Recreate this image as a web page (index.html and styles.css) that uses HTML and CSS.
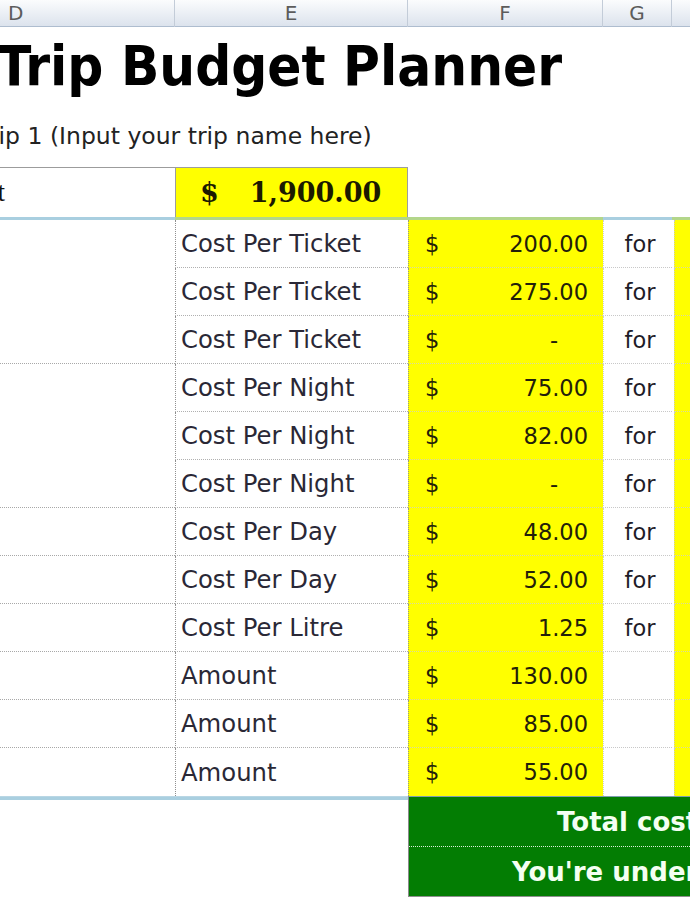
FILE: index.html
```html
<!DOCTYPE html>
<html>
<head>
<meta charset="utf-8">
<link rel="stylesheet" href="styles.css">
</head>
<body>
<div class="sheet">
  <div class="colhead">
    <div class="ch ch-d">D</div>
    <div class="ch">E</div>
    <div class="ch">F</div>
    <div class="ch">G</div>
    <div class="ch ch-h"></div>
  </div>

  <div class="title-row"><span class="title">Trip Budget Planner</span></div>
  <div class="sub-row"><span class="subtitle">Trip 1 (Input your trip name here)</span></div>

  <div class="budget-row">
    <div class="b-label"><span>Total Budget</span></div>
    <div class="b-value"><span class="cur">$</span><span>1,900.00</span></div>
  </div>
  <div class="sep-top">
    <div class="seg blue"></div><div class="seg green"></div><div class="seg green"></div><div class="seg blue"></div><div class="seg green"></div>
  </div>

  <div class="grid">
    <div class="d span3"></div>
    <div class="e">Cost Per Ticket</div><div class="f"><span>$</span><span>200.00</span></div><div class="g">for</div><div class="h"></div>
    <div class="e">Cost Per Ticket</div><div class="f"><span>$</span><span>275.00</span></div><div class="g">for</div><div class="h"></div>
    <div class="e">Cost Per Ticket</div><div class="f"><span>$</span><span class="dash">-</span></div><div class="g">for</div><div class="h"></div>

    <div class="d span3"></div>
    <div class="e">Cost Per Night</div><div class="f"><span>$</span><span>75.00</span></div><div class="g">for</div><div class="h"></div>
    <div class="e">Cost Per Night</div><div class="f"><span>$</span><span>82.00</span></div><div class="g">for</div><div class="h"></div>
    <div class="e">Cost Per Night</div><div class="f"><span>$</span><span class="dash">-</span></div><div class="g">for</div><div class="h"></div>

    <div class="d"></div>
    <div class="e">Cost Per Day</div><div class="f"><span>$</span><span>48.00</span></div><div class="g">for</div><div class="h"></div>
    <div class="d"></div>
    <div class="e">Cost Per Day</div><div class="f"><span>$</span><span>52.00</span></div><div class="g">for</div><div class="h"></div>
    <div class="d"></div>
    <div class="e">Cost Per Litre</div><div class="f"><span>$</span><span>1.25</span></div><div class="g">for</div><div class="h"></div>
    <div class="d"></div>
    <div class="e">Amount</div><div class="f"><span>$</span><span>130.00</span></div><div class="g"></div><div class="h"></div>
    <div class="d"></div>
    <div class="e">Amount</div><div class="f"><span>$</span><span>85.00</span></div><div class="g"></div><div class="h"></div>
    <div class="d"></div>
    <div class="e">Amount</div><div class="f"><span>$</span><span>55.00</span></div><div class="g"></div><div class="h"></div>
  </div>

  <div class="bottom">
    <div class="bottom-left"></div>
    <div class="totals">
      <div class="tot tot-1">Total cost</div>
      <div class="tot tot-2">You're under</div>
    </div>
  </div>
</div>
</body>
</html>
```

FILE: styles.css
```css
html, body {
  margin: 0;
  padding: 0;
  background: #ffffff;
}
body {
  width: 690px;
  height: 900px;
  overflow: hidden;
  font-family: "DejaVu Sans", Verdana, sans-serif;
  color: #1e1c28;
}
.sheet {
  width: 690px;
}

/* column header */
.colhead {
  display: grid;
  grid-template-columns: 175px 233px 195px 69px 1fr;
  height: 26px;
  background: linear-gradient(#fbfcfd, #dce3ed);
  border-bottom: 1px solid #aebdcf;
}
.ch {
  border-right: 1px solid #c3ccd8;
  color: #5c5c5c;
  font-size: 20px;
  line-height: 27px;
  text-align: center;
  font-family: "DejaVu Sans", sans-serif;
}
.ch-d {
  text-align: left;
  padding-left: 8px;
}
.ch-h {
  border-right: none;
}

/* title */
.title-row {
  height: 78px;
  line-height: 78px;
  white-space: nowrap;
  overflow: hidden;
}
.title {
  font-family: "DejaVu Sans Condensed", "DejaVu Sans", sans-serif;
  font-stretch: condensed;
  font-weight: bold;
  font-size: 56px;
  color: #000000;
  margin-left: -3px;
}
.sub-row {
  height: 62px;
  line-height: 62px;
  white-space: nowrap;
  overflow: hidden;
}
.subtitle {
  display: inline-block;
  font-family: "DejaVu Sans", sans-serif;
  font-size: 23.5px;
  color: #222;
  margin-left: -22px;
}

/* budget */
.budget-row {
  display: grid;
  grid-template-columns: 175px 233px 1fr;
  height: 50px;
}
.b-label {
  border-top: 1px solid #9c9c9c;
  overflow: hidden;
  display: flex;
  justify-content: flex-end;
  align-items: center;
  padding-right: 170px;
  white-space: nowrap;
  font-family: "Liberation Serif", serif;
  font-size: 27px;
  color: #111;
}
.b-value {
  background: #ffff00;
  border: 1px solid #9d9d9d;
  border-bottom: none;
  display: flex;
  align-items: center;
  gap: 31px;
  padding-left: 24px;
  font-family: "DejaVu Serif", "Liberation Serif", serif;
  font-weight: bold;
  font-size: 27px;
  color: #1b1a00;
}
.sep-top {
  display: grid;
  grid-template-columns: 175px 233px 195px 69px 1fr;
  height: 3px;
}
.seg.blue { background: #a9cfe0; }
.seg.green { background: #b3d68a; }

/* main grid */
.grid {
  display: grid;
  grid-template-columns: 175px 233px 195px 69px 1fr;
  grid-auto-rows: 48px;
  font-size: 22.5px;
}
.d {
  border-bottom: 1px dotted #a8a8a8;
}
.span3 {
  grid-row: span 3;
}
.e {
  border-left: 1px dotted #8f8f8f;
  border-bottom: 1px dotted #b0b0b0;
  padding-left: 5px;
  display: flex;
  align-items: center;
  white-space: nowrap;
  font-size: 24.3px;
  color: #2a2836;
}
.f {
  background: #ffff00;
  border-left: 1px dotted #9a9a7a;
  border-bottom: 1px dotted #d6d6a8;
  display: flex;
  align-items: center;
  justify-content: space-between;
  padding: 0 15px 0 16px;
  color: #22200a;
}
.f .dash {
  padding-right: 30px;
}
.g {
  border-left: 1px dotted #d0d0d0;
  border-bottom: 1px dotted #c8c8c8;
  display: flex;
  align-items: center;
  justify-content: center;
  padding-left: 4px;
}
.h {
  background: #ffff00;
  border-left: 1px dotted #c8c8c8;
  margin-left: 2px;
  border-bottom: 1px dotted #d6d6a8;
}
.grid > div:nth-last-child(-n+5) {
  border-bottom: none;
}

/* bottom */
.bottom {
  display: grid;
  grid-template-columns: 408px 1fr;
}
.bottom-left {
  height: 3px;
  border-top: 1px solid #b9d6e4;
  background: #a9cfe0;
}
.totals {
  border-top: 1px solid #7f9eb0;
  border-left: 1px solid #8a8a8a;
  border-bottom: 1px solid #8f8f8f;
}
.tot {
  background: #037d03;
  height: 49px;
  line-height: 50px;
  color: #f4fff2;
  font-family: "DejaVu Sans", sans-serif;
  font-weight: bold;
  font-size: 26px;
  white-space: nowrap;
  overflow: hidden;
}
.tot-1 {
  padding-left: 148px;
  border-bottom: 1px dotted #d8f0d8;
}
.tot-2 {
  padding-left: 103px;
}
```
